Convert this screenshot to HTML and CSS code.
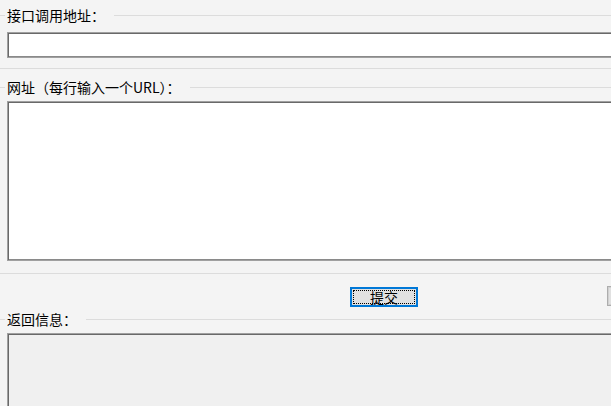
FILE: index.html
```html
<!DOCTYPE html>
<html lang="zh">
<head>
<meta charset="utf-8">
<link rel="stylesheet" href="styles.css">
</head>
<body>
<div class="page">
  <div class="group-head head-api">
    <span class="lead"></span><span class="label">接口调用地址：</span><span class="rule"></span>
  </div>
  <input class="field api-field" type="text">
  <div class="sep sep-1"></div>

  <div class="group-head head-url">
    <span class="lead"></span><span class="label">网址（每行输入一个URL）：</span><span class="rule"></span>
  </div>
  <textarea class="field url-field"></textarea>
  <div class="sep sep-2"></div>

  <div class="actions">
    <button class="btn btn-submit" type="button">提交</button>
    <button class="btn btn-other" type="button"></button>
  </div>

  <div class="group-head head-ret">
    <span class="lead"></span><span class="label">返回信息：</span><span class="rule"></span>
  </div>
  <div class="field ret-box"></div>
</div>
</body>
</html>
```

FILE: styles.css
```css
html, body {
  margin: 0;
  padding: 0;
  overflow: hidden;
  width: 611px;
  height: 406px;
  background: #f4f4f4;
}

.page {
  display: flex;
  flex-direction: column;
  width: 760px;
  font-family: "Noto Sans CJK SC", "Noto Sans", sans-serif;
  font-size: 14px;
  color: #000;
}

.group-head {
  display: flex;
  align-items: center;
  height: 15px;
}

.group-head .lead {
  width: 5px;
  height: 1px;
  background: #dcdcdc;
}

.group-head .label {
  padding: 0 9px 0 2px;
  line-height: 15px;
  white-space: nowrap;
}

.group-head .rule {
  flex: 1;
  height: 1px;
  background: #dcdcdc;
}

.head-api { margin-top: 8px; }
.head-url { margin-top: 11px; }
.head-ret { margin-top: 5px; }

.field {
  box-sizing: border-box;
  display: block;
  margin: 0 0 0 7px;
  padding: 0;
  width: 740px;
  border: 1px solid #a0a0a0;
  box-shadow: inset 1px 1px 0 #696969, inset -1px -1px 0 #8a8a8a;
  background: #fff;
  font: inherit;
  outline: none;
  resize: none;
}

.api-field {
  margin-top: 9px;
  height: 26px;
}

.url-field {
  margin-top: 6px;
  height: 160px;
}

.ret-box {
  margin-top: 6px;
  height: 120px;
  background: #f0f0f0;
}

.sep {
  height: 1px;
  background: #dcdcdc;
}

.sep-1 { margin-top: 10px; }
.sep-2 { margin-top: 12px; }

.actions {
  display: flex;
  align-items: flex-start;
  gap: 189px;
  margin-top: 13px;
  padding-left: 350px;
  height: 20px;
}

.btn {
  box-sizing: border-box;
  margin: 0;
  padding: 0;
  height: 20px;
  font-family: "Noto Sans CJK SC", "Noto Sans", sans-serif;
  font-size: 14px;
  line-height: 14px;
  color: #000;
  background: #e1e1e1;
}

.btn-submit {
  width: 68px;
  border: 2px solid #0078d7;
  outline: 1px dotted #000;
  outline-offset: -4px;
}

.btn-other {
  width: 68px;
  margin-top: -1px;
  border: 1px solid #adadad;
  box-shadow: inset 0 0 0 1px #d0d0d0;
}
```
